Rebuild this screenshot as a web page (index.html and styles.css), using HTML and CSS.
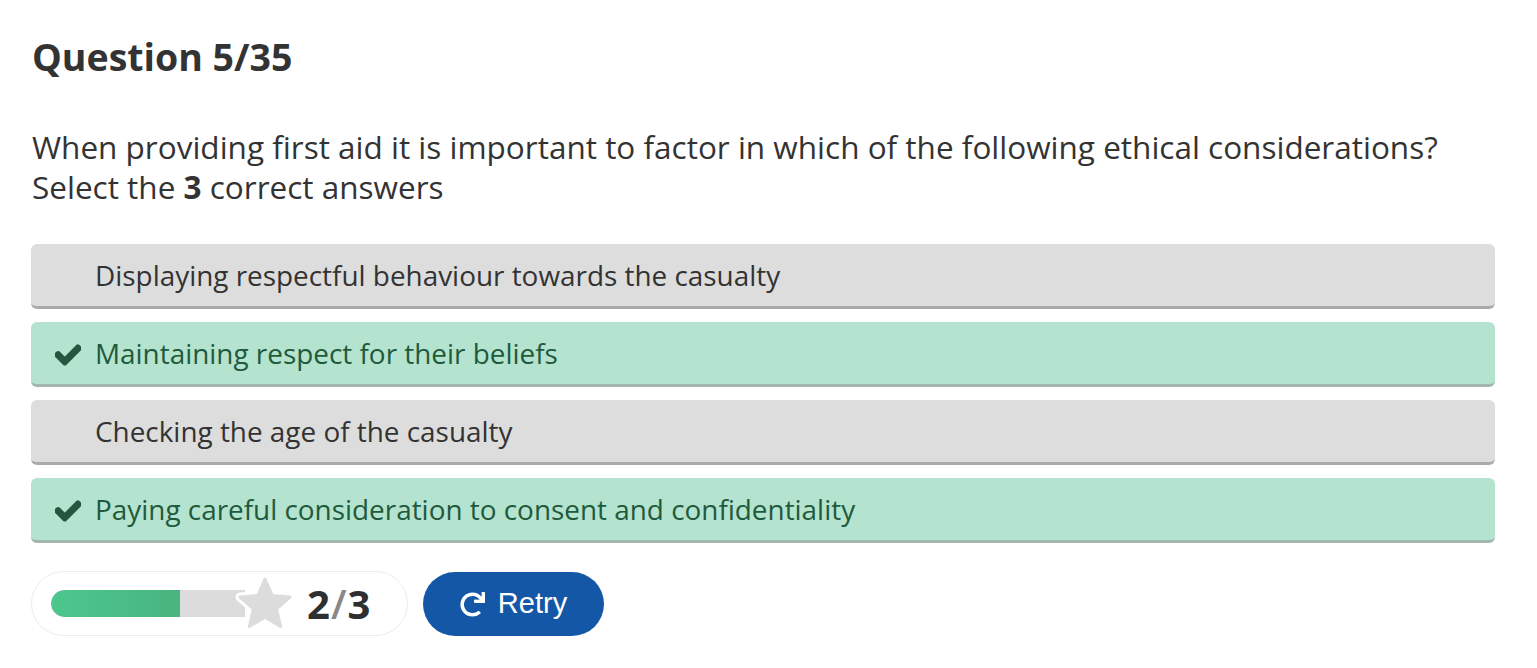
FILE: index.html
```html
<!DOCTYPE html>
<html>
<head>
<meta charset="utf-8">
<link rel="stylesheet" href="styles.css">
</head>
<body>
<div class="quiz">
  <h1 class="title">Question 5/35</h1>
  <p class="question">When providing first aid it is important to factor in which of the following ethical considerations?<br>Select the <b>3</b> correct answers</p>
  <div class="options">
    <div class="option">
      <span class="icon"></span>
      <span class="label">Displaying respectful behaviour towards the casualty</span>
    </div>
    <div class="option correct">
      <span class="icon"><svg viewBox="0 0 512 512" width="26" height="26"><path fill="#25573f" stroke="#25573f" stroke-width="36" stroke-linejoin="round" d="M173.898 439.404l-166.4-166.4c-9.997-9.997-9.997-26.206 0-36.204l36.203-36.204c9.997-9.998 26.207-9.998 36.204 0L192 312.69 432.095 72.596c9.997-9.997 26.207-9.997 36.204 0l36.203 36.204c9.997 9.997 9.997 26.206 0 36.204l-294.4 294.401c-9.998 9.997-26.207 9.997-36.204-.001z"/></svg></span>
      <span class="label">Maintaining respect for their beliefs</span>
    </div>
    <div class="option">
      <span class="icon"></span>
      <span class="label">Checking the age of the casualty</span>
    </div>
    <div class="option correct">
      <span class="icon"><svg viewBox="0 0 512 512" width="26" height="26"><path fill="#25573f" stroke="#25573f" stroke-width="36" stroke-linejoin="round" d="M173.898 439.404l-166.4-166.4c-9.997-9.997-9.997-26.206 0-36.204l36.203-36.204c9.997-9.998 26.207-9.998 36.204 0L192 312.69 432.095 72.596c9.997-9.997 26.207-9.997 36.204 0l36.203 36.204c9.997 9.997 9.997 26.206 0 36.204l-294.4 294.401c-9.998 9.997-26.207 9.997-36.204-.001z"/></svg></span>
      <span class="label">Paying careful consideration to consent and confidentiality</span>
    </div>
  </div>
  <div class="footer">
    <div class="score">
      <div class="meter">
        <div class="track"><div class="fill" style="width:66.6%"></div></div>
        <svg class="star" viewBox="0 0 60 60" width="60" height="60">
          <polygon points="30,4 37.3,20.5 55,22 41.6,33.8 45.6,51.5 30,42.2 14.4,51.5 18.4,33.8 5,22 22.7,20.5" fill="#fff" stroke="#fff" stroke-width="9" stroke-linejoin="round"/>
          <polygon points="30,4 37.3,20.5 55,22 41.6,33.8 45.6,51.5 30,42.2 14.4,51.5 18.4,33.8 5,22 22.7,20.5" fill="#dcdcdc" stroke="#dcdcdc" stroke-width="3" stroke-linejoin="round"/>
        </svg>
      </div>
      <div class="count"><span>2</span><span class="slash">/</span><span>3</span></div>
    </div>
    <button class="retry">
      <svg viewBox="0 0 512 512" width="25" height="25"><path fill="#fff" d="M500.33 0h-47.41a12 12 0 0 0-12 12.57l4 82.76A247.42 247.42 0 0 0 256 8C119.34 8 7.9 119.530 8 256.190 8.1 393.070 119.1 504 256 504a247.1 247.1 0 0 0 166.18-63.91 12 12 0 0 0 .48-17.43l-34-34a12 12 0 0 0-16.38-.55A176 176 0 1 1 402.1 157.8l-101.53-4.87a12 12 0 0 0-12.57 12v47.41a12 12 0 0 0 12 12h200.33a12 12 0 0 0 12-12V12a12 12 0 0 0-12-12z"/></svg>
      <span>Retry</span>
    </button>
  </div>
</div>
</body>
</html>
```

FILE: styles.css
```css
* { box-sizing: border-box; }
html, body { margin: 0; padding: 0; background: #fff; }
body {
  font-family: "Open Sans", "DejaVu Sans", sans-serif;
  color: #333;
}
.quiz {
  padding: 33px 42px 0 31px;
}
.title {
  margin: 0 0 0 1px;
  font-size: 37.5px;
  font-weight: 700;
  line-height: 48px;
  color: #333;
}
.question {
  margin: 46px 0 0 1px;
  font-size: 31.5px;
  line-height: 40px;
  color: #333;
}
.question b { font-weight: 700; }
.options {
  margin-top: 37px;
  display: flex;
  flex-direction: column;
  gap: 13px;
}
.option {
  display: flex;
  align-items: center;
  height: 65px;
  background: #dddddd;
  border-bottom: 3px solid #aaaaaa;
  border-radius: 6px;
  font-size: 27.9px;
  color: #333;
}
.option.correct {
  background: #b4e3cf;
  border-bottom-color: #a3b6ad;
  color: #1f5a3c;
}
.icon {
  width: 64px;
  display: flex;
  justify-content: flex-end;
  padding-right: 14px;
  padding-top: 3px;
}
.label { line-height: 36px; }
.footer {
  margin-top: 28px;
  display: flex;
  gap: 15px;
  align-items: center;
}
.score {
  width: 377px;
  height: 65px;
  border: 1px solid #ececec;
  border-radius: 33px;
  display: flex;
  align-items: center;
  padding-left: 19px;
}
.meter {
  position: relative;
  width: 240px;
  height: 60px;
  display: flex;
  align-items: center;
}
.track {
  width: 194px;
  height: 27px;
  background: #dcdcdc;
  border-radius: 14px 0 0 14px;
  overflow: hidden;
}
.fill {
  height: 100%;
  background: linear-gradient(90deg, #4cc78e, #49b47f);
  border-radius: 14px 0 0 14px;
}
.star {
  position: absolute;
  left: 184px;
  top: 1px;
}
.count {
  margin-left: 16px;
  font-size: 40px;
  font-weight: 700;
  color: #2f2f2f;
  letter-spacing: 1px;
}
.count .slash { color: #888; font-weight: 600; }
.retry {
  width: 181px;
  height: 64px;
  border: none;
  border-radius: 32px;
  background: #1457a7;
  color: #fff;
  display: flex;
  align-items: center;
  justify-content: center;
  gap: 13px;
  font-family: "Liberation Sans", Arial, sans-serif;
  font-size: 29px;
  padding: 0;
}
.retry svg { margin-top: 1px; }
```
